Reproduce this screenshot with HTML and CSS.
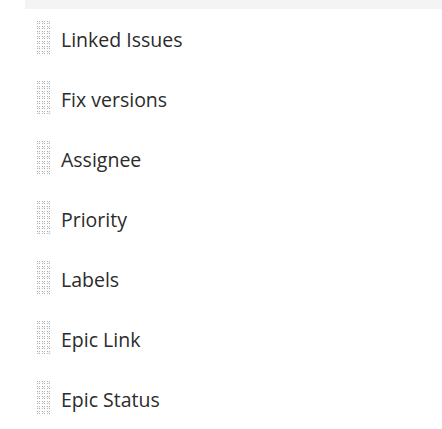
FILE: index.html
```html
<!DOCTYPE html>
<html>
<head>
<meta charset="utf-8">
<link rel="stylesheet" href="styles.css">
</head>
<body>
<svg class="defs" width="0" height="0" aria-hidden="true">
  <defs>
    <pattern id="dots" x="0" y="0" width="5" height="5" patternUnits="userSpaceOnUse">
      <rect x="0" y="0" width="1" height="1" fill="#acacac"/>
      <rect x="2" y="0" width="1" height="1" fill="#b8b8b8"/>
      <rect x="0" y="2" width="1" height="1" fill="#b8b8b8"/>
      <rect x="2" y="2" width="1" height="1" fill="#acacac"/>
      <rect x="1" y="1" width="1" height="1" fill="#e0e0e0"/>
    </pattern>
  </defs>
</svg>
<div class="topbar"></div>
<ul class="fields">
  <li class="field"><svg class="handle" width="13" height="34"><rect width="13" height="34" fill="url(#dots)"/></svg><span class="label">Linked Issues</span></li>
  <li class="field"><svg class="handle" width="13" height="34"><rect width="13" height="34" fill="url(#dots)"/></svg><span class="label">Fix versions</span></li>
  <li class="field"><svg class="handle" width="13" height="34"><rect width="13" height="34" fill="url(#dots)"/></svg><span class="label">Assignee</span></li>
  <li class="field"><svg class="handle" width="13" height="34"><rect width="13" height="34" fill="url(#dots)"/></svg><span class="label">Priority</span></li>
  <li class="field"><svg class="handle" width="13" height="34"><rect width="13" height="34" fill="url(#dots)"/></svg><span class="label">Labels</span></li>
  <li class="field"><svg class="handle" width="13" height="34"><rect width="13" height="34" fill="url(#dots)"/></svg><span class="label">Epic Link</span></li>
  <li class="field"><svg class="handle" width="13" height="34"><rect width="13" height="34" fill="url(#dots)"/></svg><span class="label">Epic Status</span></li>
</ul>
</body>
</html>
```
FILE: styles.css
```css
html, body {
  margin: 0;
  padding: 0;
  background: #ffffff;
}
body {
  font-family: "Open Sans", "Noto Sans", "Liberation Sans", sans-serif;
  color: #2b2b2b;
}
.defs {
  position: absolute;
  width: 0;
  height: 0;
}
.topbar {
  margin-left: 25px;
  height: 9px;
  background: #f4f4f4;
}
.fields {
  list-style: none;
  margin: 0;
  padding: 0;
  padding-top: 12px;
}
.field {
  display: flex;
  align-items: flex-start;
  height: 60px;
  padding-left: 37px;
}
.handle {
  display: block;
  flex: none;
}
.label {
  margin-left: 11px;
  font-size: 19.5px;
  line-height: 28px;
  margin-top: 5px;
}
```
